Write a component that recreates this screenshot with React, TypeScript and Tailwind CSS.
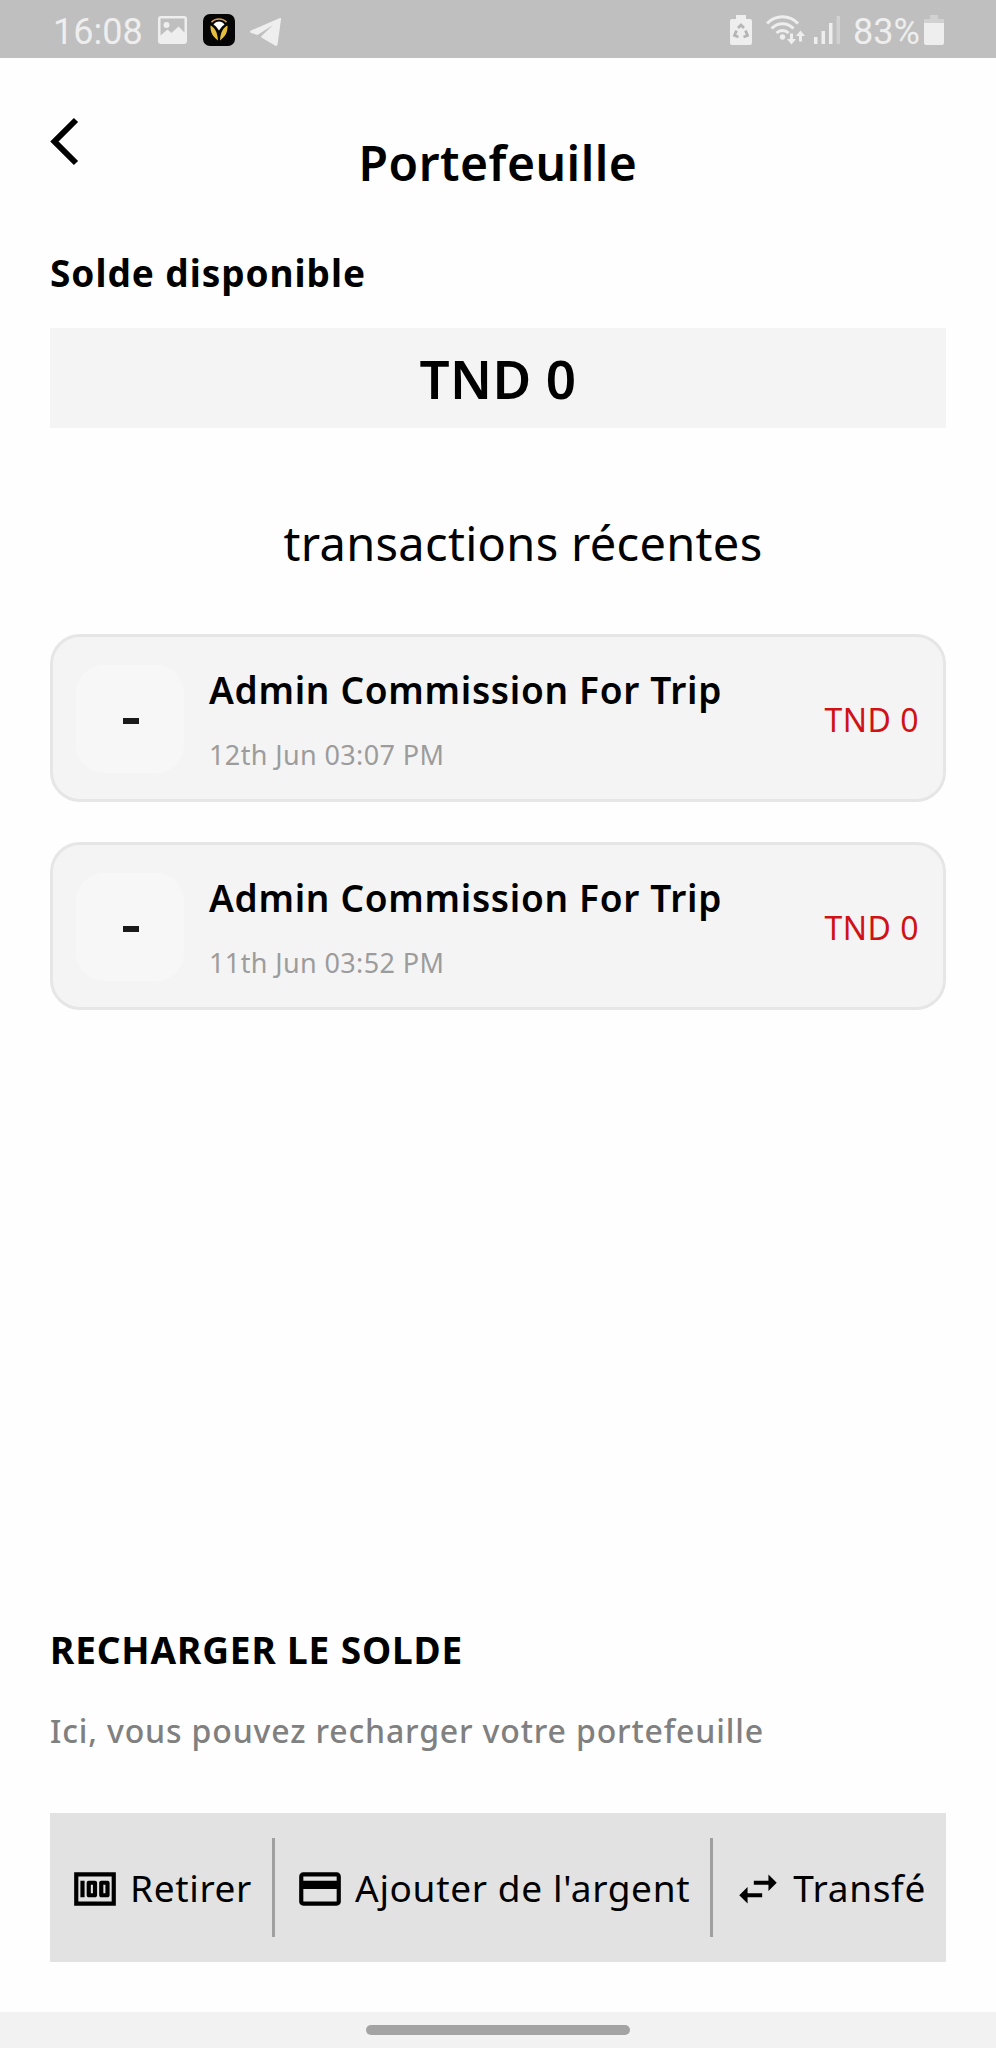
import type { ReactNode } from "react";
import { MdCreditCard, MdSwapHoriz } from "react-icons/md";

type Transaction = {
  id: number;
  title: string;
  date: string;
  amount: string;
};

const transactions: Transaction[] = [
  { id: 1, title: "Admin Commission For Trip", date: "12th Jun 03:07 PM", amount: "TND 0" },
  { id: 2, title: "Admin Commission For Trip", date: "11th Jun 03:52 PM", amount: "TND 0" },
];

function StatusBar() {
  return (
    <div className="flex h-[58px] items-center bg-[#bfbfbf] pt-[2px] pr-[52px] pl-[53px] font-['Roboto',sans-serif] text-[36px] leading-none text-[#eeeeee]">
      <span className="w-[89px] whitespace-nowrap pt-[3px]">16:08</span>
      {/* gallery */}
      <svg className="ml-4 h-[28px] w-[29px]" viewBox="0 0 29 28">
        <path
          fill="currentColor"
          fillRule="evenodd"
          d="M3 0h23a3 3 0 0 1 3 3v22a3 3 0 0 1-3 3H3a3 3 0 0 1-3-3V3a3 3 0 0 1 3-3zM2.500 2.500v17l7-6 4 3.500 7-6.500 6 6v-14zM8.500 6a3 3 0 1 1 0 6 3 3 0 0 1 0-6z"
        />
      </svg>
      {/* driver app */}
      <svg className="ml-4 size-[32px]" viewBox="0 0 32 32">
        <rect width="32" height="32" rx="7" fill="#050505" />
        <path d="M8.500 8.300c3.500-4.300 11.500-4.300 15 0" fill="none" stroke="#d9a05a" strokeWidth="1.500" />
        <path d="M10.500 10.500c2.500-4 8.500-4 11 0l-2.500 2-3 4-3-4z" fill="#fff" />
        <path d="M7.500 11.500c4 2 7 6 7.500 15C10 23 7 18 7.500 11.500zM24.500 11.500c-4 2-7 6-7.500 15 5-3.500 8-8.500 7.500-15z" fill="#e6bd3c" />
      </svg>
      {/* telegram */}
      <svg className="mt-[3px] ml-[15px] h-[28px] w-[31px]" viewBox="0 0 31 28">
        <path
          fill="currentColor"
          d="M30 0 1 12.500c-1.500.8-1.200 2 .2 2.500l6.300 2L23 7 11.500 18c-.6.700-.4 1.200.3 1.700L25 27.500c1.300.8 2.300.3 2.600-1.200L31 1.500C31.200.3 30.800-.3 30 0z"
        />
      </svg>

      <div className="ml-auto flex items-center">
        {/* battery saver */}
        <svg className="h-[30px] w-[22px]" viewBox="0 0 22 30">
          <path fill="currentColor" d="M6 0h10v4h4a2 2 0 0 1 2 2v22a2 2 0 0 1-2 2H2a2 2 0 0 1-2-2V6a2 2 0 0 1 2-2h4z" />
          <path
            d="m8 13 3-3 3 3M15.500 15.500l2 5-4 1.500M8.500 22l-4-1.500 2-5"
            fill="none"
            stroke="#b5b5b5"
            strokeWidth="2.800"
          />
        </svg>
        {/* wifi */}
        <svg className="ml-[14px] h-[30px] w-[40px]" viewBox="0 0 40 30">
          <g fill="none" stroke="currentColor" strokeWidth="3">
            <path d="M1 8.500C10-.5 23-.5 32 8.500" />
            <path d="M5.500 13.500c6.500-6.500 15.500-6.500 22 0" />
            <path d="M10.500 18c3.500-3.500 8.500-3.500 12 0" />
          </g>
          <circle cx="16.500" cy="22" r="2.700" fill="currentColor" />
          <path fill="currentColor" d="M24 18.500h3V24h3l-4.500 5.500L21 24h3zM33 26.500h3V21h3l-4.500-5.500L30 21h3z" />
        </svg>
        {/* signal */}
        <svg className="ml-[8px] h-[28px] w-[26px]" viewBox="0 0 26 28">
          <path fill="currentColor" d="M0 21h3.500v7H0zM7.500 15H11v13H7.500zM15 7h3.500v21H15z" />
          <path fill="currentColor" opacity=".4" d="M22.500 0H26v28h-3.500z" />
        </svg>
        <span className="ml-[13px] w-[68px] whitespace-nowrap pt-[3px]">83%</span>
        {/* battery */}
        <svg className="ml-[3px] h-[30px] w-[20px]" viewBox="0 0 20 30">
          <path fill="currentColor" opacity=".4" d="M6 0h8v4h6v5H0V4h6z" />
          <path fill="currentColor" d="M0 8h20v20a2 2 0 0 1-2 2H2a2 2 0 0 1-2-2z" />
        </svg>
      </div>
    </div>
  );
}

function TransactionCard({ transaction }: { transaction: Transaction }) {
  return (
    <article className="flex h-[168px] items-center rounded-[30px] border-[3px] border-[#e6e6e6] bg-[#f4f4f4] pt-px pr-[24px] pl-[23px]">
      <div className="flex size-[108px] items-center justify-center rounded-[28px] bg-[#f7f7f7]">
        <span className="mt-[4px] ml-[2px] h-[6px] w-4 bg-[#1a1a1a]" />
      </div>
      <div className="ml-[25px] flex-1">
        <h3 className="text-[37px] leading-[50px] font-semibold tracking-[0.7px]">{transaction.title}</h3>
        <p className="mt-[22px] text-[27px] leading-[36px] tracking-[0.37px] text-[#9c9c9c]">{transaction.date}</p>
      </div>
      <span className="pt-[3px] text-[32px] tracking-[0.5px] text-[#d01215]">{transaction.amount}</span>
    </article>
  );
}

function Action({ icon, label }: { icon: ReactNode; label: string }) {
  return (
    <button className="flex items-center gap-[10px] whitespace-nowrap">
      {icon}
      <span>{label}</span>
    </button>
  );
}

export default function App() {
  return (
    <div className="flex h-[2048px] w-[996px] flex-col overflow-hidden bg-[#fefefe] font-['Noto_Sans',sans-serif] text-black">
      <StatusBar />

      <main className="flex flex-1 flex-col px-[50px]">
        <header className="grid grid-cols-[1fr_auto_1fr] pt-[58px]">
          <svg className="h-[50px] w-[30px]" viewBox="0 0 30 50" aria-label="Retour">
            <path d="M26 4 4.500 25.500 26 47" fill="none" stroke="currentColor" strokeWidth="6" />
          </svg>
          <h1 className="mt-[17px] text-[48px] leading-[60px] font-semibold tracking-[0.5px]">Portefeuille</h1>
        </header>

        <h2 className="mt-[55px] text-[37px] leading-[50px] font-bold tracking-[0.95px]">Solde disponible</h2>
        <div className="mt-[30px] flex h-[100px] items-center justify-center bg-[#f4f4f4] pt-[2px] text-[53px] font-semibold tracking-[0.4px]">
          TND 0
        </div>

        <h2 className="mt-[85px] pl-[50px] text-center text-[47px] leading-[60px] tracking-[0.3px]">
          transactions récentes
        </h2>
        <div className="mt-[61px] flex flex-col gap-[40px]">
          {transactions.map((t) => (
            <TransactionCard key={t.id} transaction={t} />
          ))}
        </div>

        <section className="mt-auto mb-[50px]">
          <h2 className="text-[37px] leading-[50px] font-bold tracking-[0.87px]">RECHARGER LE SOLDE</h2>
          <p className="mt-[34px] text-[32px] leading-[44px] font-medium tracking-[0.85px] text-[#808080]">
            Ici, vous pouvez recharger votre portefeuille
          </p>
          <div className="mt-[60px] flex h-[149px] items-center justify-between bg-[#e2e2e2] px-[20px] text-[37px] tracking-[0.65px]">
            <Action
              icon={
                <svg className="mt-[2px] size-[50px]" viewBox="0 0 24 24" fill="currentColor">
                  <path d="M15 16h3c.55 0 1-.45 1-1V9c0-.55-.45-1-1-1h-3c-.55 0-1 .45-1 1v6c0 .55.45 1 1 1zm1-6h1v4h-1v-4zM9 16h3c.55 0 1-.45 1-1V9c0-.55-.45-1-1-1H9c-.55 0-1 .45-1 1v6c0 .55.45 1 1 1zm1-6h1v4h-1v-4zM5 8h2v8H5z" />
                  <path d="M2 4v16h20V4H2zm2 14V6h16v12H4z" />
                </svg>
              }
              label="Retirer"
            />
            <span className="h-[99px] w-[3px] bg-[#a0a0a0]" />
            <Action icon={<MdCreditCard className="mt-[2px] size-[50px]" />} label="Ajouter de l'argent" />
            <span className="h-[99px] w-[3px] bg-[#a0a0a0]" />
            <Action icon={<MdSwapHoriz className="mt-[2px] size-[50px]" />} label="Transfé" />
          </div>
        </section>
      </main>

      {/* gesture bar */}
      <div className="flex h-[36px] justify-center bg-[#f2f2f2] pt-[13px]">
        <div className="h-[10px] w-[264px] rounded-full bg-[#a3a3a3]" />
      </div>
    </div>
  );
}
